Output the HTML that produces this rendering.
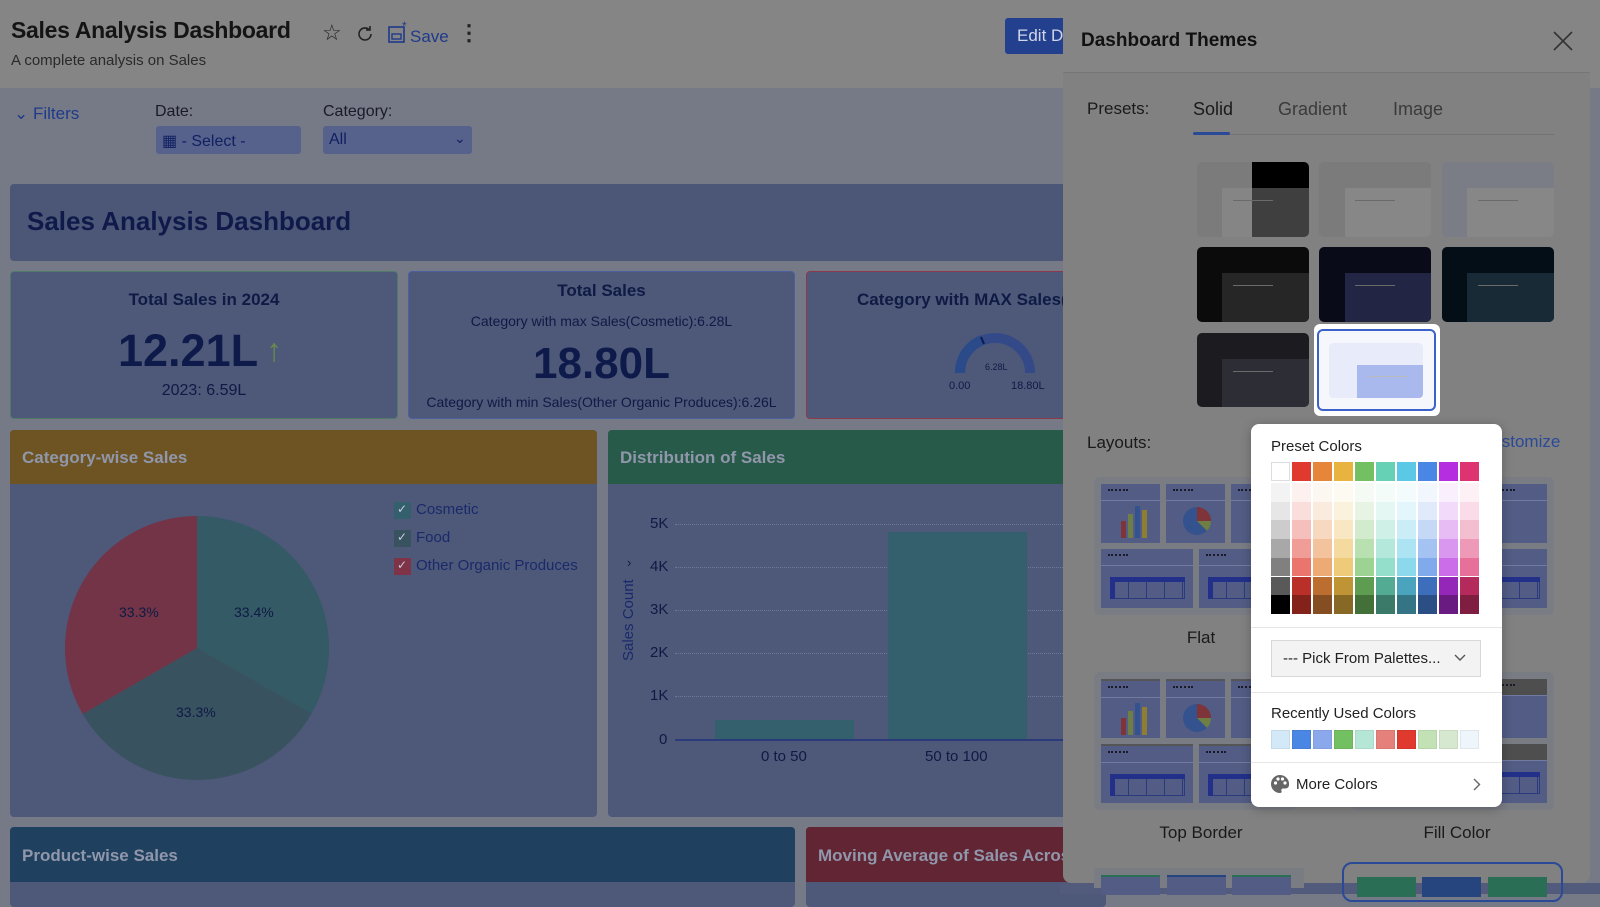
<!DOCTYPE html>
<html><head><meta charset="utf-8">
<style>
*{box-sizing:border-box;margin:0;padding:0}
body{width:1600px;height:894px;overflow:hidden;position:relative;background:#767a86;font-family:"Liberation Sans",sans-serif;color:#0f1a45}
.a{position:absolute}
.hdr{left:0;top:0;width:1600px;height:88px;background:#858585}
.card{background:#4e5879;border-radius:4px}
.t{white-space:nowrap}
.mini{position:absolute;background:#525c84;}
.mini .hl{position:absolute;left:0;right:0;top:16px;height:1px;background:#717ba0}
.mini .dots{position:absolute;left:7px;top:5px;width:20px;border-top:2px dotted #1a1a2a}
.grp{position:absolute;background:#7a7c84;border-radius:6px}
</style></head><body>
<div class="a hdr"></div>
<div class="a t" style="left:11px;top:17px;font-size:23px;font-weight:bold;color:#141414;letter-spacing:-0.3px">Sales Analysis Dashboard</div>
<div class="a t" style="left:11px;top:52px;font-size:15px;color:#2a2a2a">A complete analysis on Sales</div>
<div class="a t" style="left:322px;top:20px;font-size:22px;color:#222">☆</div>
<svg class="a" style="left:355px;top:24px" width="20" height="20" viewBox="0 0 20 20"><path d="M16 10a6 6 0 1 1-2-4.5" fill="none" stroke="#222" stroke-width="1.6"/><path d="M15 2v4h-4" fill="none" stroke="#222" stroke-width="1.6"/></svg>
<svg class="a" style="left:387px;top:21px" width="22" height="24" viewBox="0 0 22 24"><rect x="2" y="6" width="15" height="15" fill="none" stroke="#1f3a8a" stroke-width="1.6"/><rect x="5" y="13" width="9" height="5" fill="none" stroke="#1f3a8a" stroke-width="1.4"/><text x="15" y="9" font-size="12" fill="#1f3a8a" font-family="Liberation Sans">*</text></svg>
<div class="a t" style="left:410px;top:27px;font-size:17px;color:#1f3a8a">Save</div>
<div class="a t" style="left:458px;top:20px;font-size:22px;color:#222;font-weight:bold">⋮</div>
<div class="a" style="left:1005px;top:18px;width:70px;height:36px;background:#23408f;border-radius:3px"></div>
<div class="a t" style="left:1017px;top:26px;font-size:17px;color:#d0d6e8">Edit D</div>
<div class="a t" style="left:14px;top:104px;font-size:17px;color:#1f3a8a">⌄ Filters</div>
<div class="a t" style="left:155px;top:103px;font-size:16px;color:#1a1a2a">Date:</div>
<div class="a" style="left:156px;top:126px;width:145px;height:28px;background:#56618c;border-radius:3px"></div>
<div class="a t" style="left:162px;top:131px;font-size:16px;color:#102060">▦ - Select -</div>
<div class="a t" style="left:323px;top:103px;font-size:16px;color:#1a1a2a">Category:</div>
<div class="a" style="left:323px;top:126px;width:149px;height:28px;background:#56618c;border-radius:3px"></div>
<div class="a t" style="left:329px;top:131px;font-size:16px;color:#102060">All</div>
<div class="a t" style="left:454px;top:130px;font-size:14px;color:#102060">⌄</div>
<div class="a" style="left:10px;top:184px;width:1070px;height:77px;background:#4c5676;border-radius:4px"></div>
<div class="a t" style="left:27px;top:206px;font-size:26px;font-weight:bold;color:#0f1a4a">Sales Analysis Dashboard</div>
<div class="a card" style="left:10px;top:271px;width:388px;height:148px;border:1px solid #4f7a6a"></div>
<div class="a t" style="left:10px;top:290px;width:388px;text-align:center;font-size:17px;font-weight:bold">Total Sales in 2024</div>
<div class="a t" style="left:118px;top:325px;font-size:45px;font-weight:bold;color:#0e1a4a">12.21L</div>
<div class="a t" style="left:266px;top:332px;font-size:32px;color:#6a8a4a">↑</div>
<div class="a t" style="left:10px;top:382px;width:388px;text-align:center;font-size:16px">2023: 6.59L</div>
<div class="a card" style="left:408px;top:271px;width:387px;height:148px;border:1px solid #4a60a0"></div>
<div class="a t" style="left:408px;top:281px;width:387px;text-align:center;font-size:17px;font-weight:bold">Total Sales</div>
<div class="a t" style="left:408px;top:313px;width:387px;text-align:center;font-size:14px">Category with max Sales(Cosmetic):6.28L</div>
<div class="a t" style="left:408px;top:339px;width:387px;text-align:center;font-size:44px;font-weight:bold;color:#0e1a4a">18.80L</div>
<div class="a t" style="left:408px;top:394px;width:387px;text-align:center;font-size:14px">Category with min Sales(Other Organic Produces):6.26L</div>
<div class="a card" style="left:806px;top:271px;width:290px;height:148px;border:1px solid #8a3a4a"></div>
<div class="a t" style="left:857px;top:290px;font-size:17px;font-weight:bold">Category with MAX Sales(</div>
<svg class="a" style="left:950px;top:328px" width="90" height="50" viewBox="0 0 90 50"><path d="M10 45 A35 35 0 0 1 80 45" fill="none" stroke="#344a88" stroke-width="10"/><path d="M10 45 A35 35 0 0 1 32 12" fill="none" stroke="#2a4a8a" stroke-width="10"/><line x1="31" y1="9" x2="34" y2="16" stroke="#0e1a4a" stroke-width="2"/></svg>
<div class="a t" style="left:985px;top:362px;font-size:9px">6.28L</div>
<div class="a t" style="left:949px;top:380px;font-size:11px">0.00</div>
<div class="a t" style="left:1011px;top:380px;font-size:11px">18.80L</div>
<div class="a card" style="left:10px;top:430px;width:587px;height:387px"></div>
<div class="a" style="left:10px;top:430px;width:587px;height:54px;background:#6e5422;border-radius:4px 4px 0 0"></div>
<div class="a t" style="left:22px;top:448px;font-size:17px;font-weight:bold;color:#9097ab">Category-wise Sales</div>
<svg class="a" style="left:60px;top:511px" width="274" height="274" viewBox="-137 -137 274 274">
<path d="M0 0 L0 -132 A132 132 0 0 1 114.6 65.5 Z" fill="#345a66"/>
<path d="M0 0 L114.6 65.5 A132 132 0 0 1 -114.3 66 Z" fill="#38525f"/>
<path d="M0 0 L-114.3 66 A132 132 0 0 1 0 -132 Z" fill="#723446"/>
</svg>
<div class="a t" style="left:119px;top:604px;font-size:14px">33.3%</div>
<div class="a t" style="left:234px;top:604px;font-size:14px">33.4%</div>
<div class="a t" style="left:176px;top:704px;font-size:14px">33.3%</div>
<div class="a" style="left:394px;top:502px;width:17px;height:17px;background:#345f6c"></div>
<div class="a" style="left:394px;top:530px;width:17px;height:17px;background:#38525f"></div>
<div class="a" style="left:394px;top:558px;width:17px;height:17px;background:#7e3446"></div>
<div class="a t" style="left:397px;top:502px;font-size:12px;color:#c8cce0">✓</div>
<div class="a t" style="left:397px;top:530px;font-size:12px;color:#c8cce0">✓</div>
<div class="a t" style="left:397px;top:558px;font-size:12px;color:#c8cce0">✓</div>
<div class="a t" style="left:416px;top:501px;font-size:15px;color:#1a2a6a">Cosmetic</div>
<div class="a t" style="left:416px;top:529px;font-size:15px;color:#1a2a6a">Food</div>
<div class="a t" style="left:416px;top:557px;font-size:15px;color:#1a2a6a">Other Organic Produces</div>
<div class="a card" style="left:608px;top:430px;width:500px;height:387px"></div>
<div class="a" style="left:608px;top:430px;width:500px;height:54px;background:#285a4a;border-radius:4px 4px 0 0"></div>
<div class="a t" style="left:620px;top:448px;font-size:17px;font-weight:bold;color:#9097ab">Distribution of Sales</div>
<div class="a t" style="left:620px;top:578px;font-size:15px;writing-mode:vertical-rl;transform:rotate(180deg);color:#1a2a6a;height:85px;text-align:center">Sales Count</div>
<div class="a t" style="left:627px;top:555px;font-size:13px">›</div>
<div class="a t" style="left:650px;top:515px;font-size:15px">5K</div>
<div class="a t" style="left:650px;top:558px;font-size:15px">4K</div>
<div class="a t" style="left:650px;top:601px;font-size:15px">3K</div>
<div class="a t" style="left:650px;top:644px;font-size:15px">2K</div>
<div class="a t" style="left:650px;top:687px;font-size:15px">1K</div>
<div class="a t" style="left:659px;top:731px;font-size:15px">0</div>
<div class="a" style="left:675px;top:524px;width:420px;border-top:1px dotted #6c789c"></div>
<div class="a" style="left:675px;top:567px;width:420px;border-top:1px dotted #6c789c"></div>
<div class="a" style="left:675px;top:610px;width:420px;border-top:1px dotted #6c789c"></div>
<div class="a" style="left:675px;top:653px;width:420px;border-top:1px dotted #6c789c"></div>
<div class="a" style="left:675px;top:696px;width:420px;border-top:1px dotted #6c789c"></div>
<div class="a" style="left:715px;top:720px;width:139px;height:20px;background:#345f6c"></div>
<div class="a" style="left:888px;top:532px;width:139px;height:208px;background:#345f6c"></div>
<div class="a" style="left:675px;top:739px;width:420px;height:2px;background:#2a3a7a"></div>
<div class="a t" style="left:761px;top:748px;font-size:15px">0 to 50</div>
<div class="a t" style="left:925px;top:748px;font-size:15px">50 to 100</div>
<div class="a card" style="left:10px;top:827px;width:785px;height:80px"></div>
<div class="a" style="left:10px;top:827px;width:785px;height:55px;background:#20405f;border-radius:4px 4px 0 0"></div>
<div class="a t" style="left:22px;top:846px;font-size:17px;font-weight:bold;color:#9097ab">Product-wise Sales</div>
<div class="a card" style="left:806px;top:827px;width:300px;height:80px"></div>
<div class="a" style="left:806px;top:827px;width:300px;height:55px;background:#622533;border-radius:4px 4px 0 0"></div>
<div class="a t" style="left:818px;top:846px;font-size:17px;font-weight:bold;color:#9097ab">Moving Average of Sales Across</div>
<div class="a" style="left:1060px;top:883px;width:540px;height:11px;background:#525b7c"></div>

<div class="a" style="left:1063px;top:9px;width:527px;height:874px;background:#818181;border-radius:8px;overflow:hidden">
  <div class="a" style="left:0;top:0;width:527px;height:64px;background:#858585;border-bottom:1px solid #767676"></div>
</div>
<div class="a t" style="left:1081px;top:30px;font-size:19px;font-weight:bold;color:#111">Dashboard Themes</div>
<svg class="a" style="left:1553px;top:31px" width="20" height="20"><path d="M1 1L19 19M19 1L1 19" stroke="#333" stroke-width="1.6"/></svg>
<div class="a t" style="left:1087px;top:99px;font-size:17px;color:#1a1a1a">Presets:</div>
<div class="a t" style="left:1193px;top:99px;font-size:18px;color:#1a1a1a">Solid</div>
<div class="a t" style="left:1278px;top:99px;font-size:18px;color:#3a3a3a">Gradient</div>
<div class="a t" style="left:1393px;top:99px;font-size:18px;color:#3a3a3a">Image</div>
<div class="a" style="left:1193px;top:134px;width:362px;height:1px;background:#747474"></div>
<div class="a" style="left:1193px;top:132px;width:37px;height:3px;background:#2a4a98;border-radius:2px"></div>
<div class="a" style="left:1197px;top:162px;width:112px;height:75px;border-radius:5px;background:#7b7b7b;overflow:hidden"><div class="a" style="left:55px;top:0;width:57px;height:26px;background:#000"></div><div class="a" style="left:25px;top:26px;width:30px;height:49px;background:#858585"></div><div class="a" style="left:55px;top:26px;width:57px;height:49px;background:#3f3f3f"></div><div class="a" style="left:36px;top:38px;width:40px;height:1px;background:#6a6a6a"></div></div>
<div class="a" style="left:1319px;top:162px;width:112px;height:75px;border-radius:5px;background:#7b7b7b;overflow:hidden"><div class="a" style="left:26px;top:26px;width:86px;height:49px;background:#878787"></div><div class="a" style="left:36px;top:38px;width:40px;height:1px;background:#6a6a6a"></div></div>
<div class="a" style="left:1442px;top:162px;width:112px;height:75px;border-radius:5px;background:#7a7c86;overflow:hidden"><div class="a" style="left:25px;top:26px;width:87px;height:49px;background:#878787"></div><div class="a" style="left:36px;top:38px;width:40px;height:1px;background:#6a6a6a"></div></div>
<div class="a" style="left:1197px;top:247px;width:112px;height:75px;border-radius:5px;background:#0b0b0b;overflow:hidden"><div class="a" style="left:25px;top:26px;width:87px;height:49px;background:#262626"></div><div class="a" style="left:36px;top:38px;width:40px;height:1px;background:#6a6a6a"></div></div>
<div class="a" style="left:1319px;top:247px;width:112px;height:75px;border-radius:5px;background:#0a0b18;overflow:hidden"><div class="a" style="left:26px;top:26px;width:86px;height:49px;background:#222644"></div><div class="a" style="left:36px;top:38px;width:40px;height:1px;background:#6a6a6a"></div></div>
<div class="a" style="left:1442px;top:247px;width:112px;height:75px;border-radius:5px;background:#040e16;overflow:hidden"><div class="a" style="left:25px;top:26px;width:87px;height:49px;background:#172a36"></div><div class="a" style="left:36px;top:38px;width:40px;height:1px;background:#6a6a6a"></div></div>
<div class="a" style="left:1197px;top:333px;width:112px;height:74px;border-radius:5px;background:#1b1b20;overflow:hidden"><div class="a" style="left:25px;top:26px;width:87px;height:48px;background:#2d2d36"></div><div class="a" style="left:36px;top:38px;width:40px;height:1px;background:#6a6a6a"></div></div>
<div class="a" style="left:1314px;top:324px;width:126px;height:92px;border-radius:6px;background:#fff"></div>
<div class="a" style="left:1317px;top:329px;width:119px;height:82px;border-radius:6px;border:2px solid #3a62c8;background:#f5f7fc"></div>
<div class="a" style="left:1329px;top:343px;width:94px;height:55px;border-radius:4px;background:#e8ecfa"></div>
<div class="a" style="left:1357px;top:365px;width:66px;height:33px;border-radius:0 0 4px 0;background:#a9b9ee"></div>
<div class="a" style="left:1368px;top:376px;width:40px;height:1px;background:#bbbbbb"></div>
<div class="a t" style="left:1087px;top:433px;font-size:17px;color:#1a1a1a">Layouts:</div>
<div class="a t" style="left:1480px;top:432px;font-size:17px;color:#2a4a98">Customize</div>
<div id="lay"></div>
<div class="a t" style="left:1161px;top:628px;width:80px;text-align:center;font-size:17px;color:#1a1a1a">Flat</div>
<div class="a t" style="left:1141px;top:823px;width:120px;text-align:center;font-size:17px;color:#1a1a1a">Top Border</div>
<div class="a t" style="left:1397px;top:823px;width:120px;text-align:center;font-size:17px;color:#1a1a1a">Fill Color</div>
<div class="a" style="left:1342px;top:862px;width:221px;height:40px;border:2px solid #2a4a98;border-radius:10px"></div>
<div class="a" style="left:1357px;top:877px;width:59px;height:20px;background:#2a6e56"></div>
<div class="a" style="left:1422px;top:877px;width:59px;height:20px;background:#26447e"></div>
<div class="a" style="left:1488px;top:877px;width:59px;height:20px;background:#2a6e56"></div>
<div class="a" style="left:1094px;top:868px;width:210px;height:20px;background:#7a7c84"></div>
<div class="a" style="left:1101px;top:875px;width:59px;height:20px;background:#525c84;border-top:2px solid #2a6e56"></div>
<div class="a" style="left:1167px;top:875px;width:59px;height:20px;background:#525c84;border-top:2px solid #26447e"></div>
<div class="a" style="left:1232px;top:875px;width:59px;height:20px;background:#525c84;border-top:2px solid #2a6e56"></div>

<div class="a" style="left:1251px;top:424px;width:251px;height:383px;background:#fff;border-radius:8px;box-shadow:0 2px 10px rgba(0,0,0,.25)"></div>
<div class="a t" style="left:1271px;top:438px;font-size:15px;color:#222">Preset Colors</div>
<div id="grid" class="a" style="left:1271px;top:462px;width:210px;height:152px"></div>
<div class="a" style="left:1251px;top:627px;width:251px;height:1px;background:#e6e6e6"></div>
<div class="a" style="left:1271px;top:640px;width:210px;height:37px;background:#f3f3f3;border:1px solid #d8d8d8"></div>
<div class="a t" style="left:1283px;top:650px;font-size:15px;color:#222">--- Pick From Palettes...</div>
<svg class="a" style="left:1454px;top:654px" width="12" height="8"><path d="M1 1L6 6L11 1" fill="none" stroke="#555" stroke-width="1.4"/></svg>
<div class="a" style="left:1251px;top:692px;width:251px;height:1px;background:#e6e6e6"></div>
<div class="a t" style="left:1271px;top:705px;font-size:15px;color:#222">Recently Used Colors</div>
<div id="rec" class="a" style="left:1271px;top:730px;width:210px;height:19px"></div>
<div class="a" style="left:1251px;top:762px;width:251px;height:1px;background:#e6e6e6"></div>
<svg class="a" style="left:1270px;top:774px" width="20" height="20" viewBox="0 0 20 20"><path d="M10 1a9 9 0 0 0 0 18c1.5 0 2-1 1.5-2s0-2.5 1.5-2.5h2.5A3.5 3.5 0 0 0 19 11 9 9 0 0 0 10 1z" fill="#666"/><circle cx="5.5" cy="9" r="1.6" fill="#fff"/><circle cx="8" cy="5" r="1.6" fill="#fff"/><circle cx="12.5" cy="5" r="1.6" fill="#fff"/><circle cx="15" cy="9" r="1.6" fill="#fff"/></svg>
<div class="a t" style="left:1296px;top:776px;font-size:15px;color:#222">More Colors</div>
<svg class="a" style="left:1473px;top:778px" width="8" height="13"><path d="M1 1L6.5 6.5L1 12" fill="none" stroke="#666" stroke-width="1.4"/></svg>

<script>
function h(c){return [parseInt(c.substr(1,2),16),parseInt(c.substr(3,2),16),parseInt(c.substr(5,2),16)]}
function mix(a,b,t){return 'rgb('+a.map((v,i)=>Math.round(v*(1-t)+b[i]*t)).join(',')+')'}
var base=['#ffffff','#e03a2f','#e5863a','#e8b43f','#73c063','#66d1b4','#5bc8e6','#4a86e4','#b52ee0','#dd3370'];
var g=document.getElementById('grid'),s='';
var W=[0.93,0.83,0.68,0.5,0.3];
for(var c=0;c<10;c++){
 var x=c*21;
 s+='<div class="a" style="left:'+x+'px;top:0;width:19px;height:19px;background:'+base[c]+';'+(c==0?'border:1px solid #ddd':'')+'"></div>';
 var cols=[];
 if(c==0){cols=['#f3f3f3','#e6e6e6','#cccccc','#a8a8a8','#808080','#595959','#000000'];}
 else{var b=h(base[c]);for(var k=0;k<5;k++)cols.push(mix(b,[255,255,255],W[k]));cols.push(mix(b,[0,0,0],0.18));cols.push(mix(b,[0,0,0],0.42));}
 for(var r=0;r<7;r++){s+='<div class="a" style="left:'+x+'px;top:'+(21+r*18.7)+'px;width:19px;height:18.7px;background:'+cols[r]+'"></div>';}
}
g.innerHTML=s;
var rc=['#d3e9f7','#4a86e4','#8ba8ec','#73c063','#b6e6d6','#e5807a','#e03a2f','#c2e2b5','#d6e8d0','#eef5fb'];s='';
for(var i=0;i<10;i++)s+='<div class="a" style="left:'+(i*21)+'px;top:0;width:19px;height:19px;background:'+rc[i]+';border:1px solid rgba(0,0,0,.06)"></div>';
document.getElementById('rec').innerHTML=s;
function group(x,y,fill,top){
 var o='<div class="grp" style="left:'+(x-7)+'px;top:'+(y-7)+'px;width:'+(3*59+2*6+14)+'px;height:138px"></div>';
 var pos=[[0,0,59],[65,0,59],[130,0,59],[0,65,92],[98,65,91]];
 pos.forEach(function(p,i){
  var hd=fill?'<div class="a" style="left:0;top:0;right:0;height:16px;background:#4e4e4e"></div>':'';
  var bt=top?'border-top:2px solid #555;':'';
  var inner='';
  if(i==0)inner='<div class="a" style="left:20px;top:37px;width:5px;height:17px;background:#7e3438"></div><div class="a" style="left:27px;top:30px;width:5px;height:24px;background:#6e7e44"></div><div class="a" style="left:34px;top:22px;width:5px;height:32px;background:#34528e"></div><div class="a" style="left:41px;top:26px;width:5px;height:28px;background:#8e7e34"></div>';
  if(i==1)inner='<svg class="a" style="left:16px;top:22px" width="30" height="30" viewBox="-15 -15 30 30"><circle r="14" fill="#34528e"/><path d="M0 0L0-14A14 14 0 0 1 14 0Z" fill="#7e3438"/><path d="M0 0L14 0A14 14 0 0 1 10 9.9Z" fill="#6e7e44"/></svg>';
  if(i>=3)inner='<div class="a" style="left:9px;top:28px;width:75px;height:22px;border:1px solid #2a3a7a;background:repeating-linear-gradient(90deg,transparent 0 17px,#2a3a7a 17px 18px)"></div><div class="a" style="left:9px;top:28px;width:75px;height:5px;background:#22308a"></div><div class="a" style="left:9px;top:28px;width:5px;height:22px;background:#22308a"></div>';
  o+='<div class="mini" style="left:'+(x+p[0])+'px;top:'+(y+p[1])+'px;width:'+p[2]+'px;height:59px;'+bt+'">'+hd+'<div class="hl"></div><div class="dots"></div>'+inner+'</div>';
 });
 return o;
}
document.getElementById('lay').innerHTML=group(1101,484,false,false)+group(1358,484,false,false)+group(1101,679,false,true)+group(1358,679,true,false);
</script>
</body></html>
